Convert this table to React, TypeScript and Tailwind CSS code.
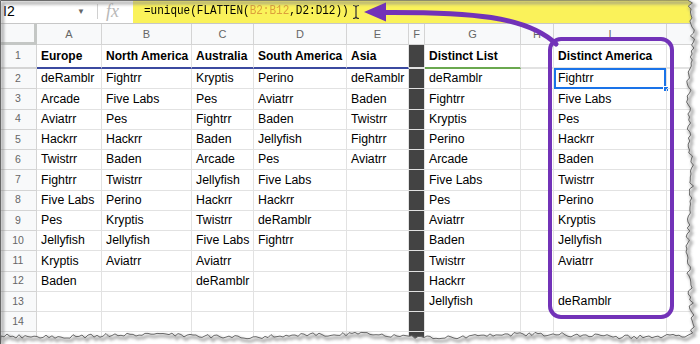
import React from "react";
import clsx from "clsx";

interface Col {
  letter: string;
  w: string;
}

const COLS: Col[] = [
  { letter: "A", w: "w-[65px]" },
  { letter: "B", w: "w-[90px]" },
  { letter: "C", w: "w-[62px]" },
  { letter: "D", w: "w-[93px]" },
  { letter: "E", w: "w-[62px]" },
  { letter: "F", w: "w-[16px]" },
  { letter: "G", w: "w-[96px]" },
  { letter: "H", w: "w-[33px]" },
  { letter: "I", w: "w-[113px]" },
  { letter: "J", w: "w-[100px]" },
];

// column contents, header first
const DATA: Record<string, string[]> = {
  A: ["Europe", "deRamblr", "Arcade", "Aviatrr", "Hackrr", "Twistrr", "Fightrr", "Five Labs", "Pes", "Jellyfish", "Kryptis", "Baden"],
  B: ["North America", "Fightrr", "Five Labs", "Pes", "Hackrr", "Baden", "Twistrr", "Perino", "Kryptis", "Jellyfish", "Aviatrr"],
  C: ["Australia", "Kryptis", "Pes", "Fightrr", "Baden", "Arcade", "Jellyfish", "Hackrr", "Twistrr", "Five Labs", "Aviatrr", "deRamblr"],
  D: ["South America", "Perino", "Aviatrr", "Baden", "Jellyfish", "Pes", "Five Labs", "Hackrr", "deRamblr", "Fightrr"],
  E: ["Asia", "deRamblr", "Baden", "Twistrr", "Fightrr", "Aviatrr"],
  G: ["Distinct List", "deRamblr", "Fightrr", "Kryptis", "Perino", "Arcade", "Five Labs", "Pes", "Aviatrr", "Baden", "Twistrr", "Hackrr", "Jellyfish"],
  I: ["Distinct America", "Fightrr", "Five Labs", "Pes", "Hackrr", "Baden", "Twistrr", "Perino", "Kryptis", "Jellyfish", "Aviatrr", "", "deRamblr"],
};

const ROWS = Array.from({ length: 15 }, (_, i) => i + 1);

function rand(i: number) {
  const x = Math.sin(i * 12.9898) * 43758.5453;
  return x - Math.floor(x);
}

// torn paper edge, right and bottom
function tornEdge() {
  const pts: string[] = ["0.5,344", "0.5,0.5"];
  let i = 0;
  for (let y = 0; y <= 334; y += 3) {
    const x = 690 + (rand(i++) - 0.5) * 5 + Math.sin(y / 23) * 2;
    pts.push(`${x.toFixed(1)},${y}`);
  }
  for (let x = 688; x >= 0; x -= 3) {
    const y = 335.5 + (rand(i++ + 400) - 0.5) * 4 + Math.sin(x / 31) * 1.5;
    pts.push(`${x},${y.toFixed(1)}`);
  }
  return pts;
}

const FormulaBar = () => (
  <div className="flex h-[24px] border-b border-[#c7c7c7]">
    <div className="flex w-[97px] items-center pl-[3px] text-[14px]">
      <span>I2</span>
      <span className="ml-auto mr-[12px] text-[8px] text-[#666]">▼</span>
    </div>
    <div className="my-[4px] w-px bg-[#d0d0d0]" />
    <div className="flex w-[35px] items-center pl-[8px] font-['Liberation_Serif',serif] text-[18px] italic text-[#b8b8b8]">
      fx
    </div>
    <div className="flex flex-1 items-center bg-[#faf25a] pl-[11px] font-['Liberation_Mono',monospace] text-[11px] leading-none">
      <span className="inline-block scale-y-[1.15]">=unique(FLATTEN(</span>
      <span className="inline-block scale-y-[1.15] text-[#dc9f3c]">B2:B12</span>
      <span className="inline-block scale-y-[1.15]">,D2:D12))</span>
      <svg width="8" height="16" viewBox="0 0 8 16" className="ml-[3px]">
        <path d="M1 1.5 Q4 1.5 4 3.5 Q4 1.5 7 1.5 M4 3.5 V12.5 M1 14.5 Q4 14.5 4 12.5 Q4 14.5 7 14.5" fill="none" stroke="#333" strokeWidth="1.2" />
      </svg>
    </div>
  </div>
);

const ColumnHeaders = () => (
  <div className="flex h-[21px]">
    <div className="w-[37px] shrink-0 border-r-[3px] border-b-[3px] border-[#c4c7c5] bg-[#f8f9fa]" />
    {COLS.map((c) => (
      <div
        key={c.letter}
        className={clsx(
          "flex shrink-0 items-center justify-center border-r border-b border-[#d4d4d4] bg-[#f8f9fa] text-[11px] text-[#666]",
          c.w
        )}
      >
        {c.letter === "J" ? "" : c.letter}
      </div>
    ))}
  </div>
);

const Cell = ({ col, row }: { col: Col; row: number }) => {
  const value = DATA[col.letter]?.[row - 1] ?? "";
  const head = row === 1;
  const dark = col.letter === "F";
  const blue = head && ["A", "B", "C", "D", "E"].includes(col.letter);
  const green = head && col.letter === "G";
  const selected = col.letter === "I" && row === 2;
  return (
    <div
      className={clsx(
        "relative flex shrink-0 items-center whitespace-nowrap border-r border-b border-[#e2e2e2] pl-[4px]",
        col.w,
        head ? "border-b-2 text-[12px] font-bold" : "text-[12.3px]",
        dark && "border-[#434343] bg-[#434343]",
        blue && "border-b-[#3b4aa0]",
        green && "border-b-[#6aa84f]"
      )}
    >
      {value}
      {selected && (
        <>
          <span className="absolute -top-px left-0 right-0 -bottom-px border-2 border-[#1a73e8]" />
          <span className="absolute -right-[3px] -bottom-[4px] h-[6px] w-[6px] border border-white bg-[#1a73e8]" />
        </>
      )}
    </div>
  );
};

const Row = ({ row }: { row: number }) => (
  <div className={clsx("flex", row === 1 ? "h-[24px]" : "h-[20.25px]")}>
    <div
      className={clsx(
        "flex w-[37px] shrink-0 items-center justify-center border-r border-b border-[#d4d4d4] bg-[#f8f9fa] text-[10.5px] text-[#666]",
        row === 1 && "border-b-2"
      )}
    >
      {row < 15 ? row : ""}
    </div>
    {COLS.map((c) => (
      <Cell key={c.letter} col={c} row={row} />
    ))}
  </div>
);

const Overlay = () => {
  const pts = tornEdge();
  const edge = "M" + pts.join(" L") + " Z";
  return (
    <svg className="pointer-events-none absolute inset-0" width="700" height="344">
      <defs>
        <filter id="blur" x="-5%" y="-5%" width="110%" height="110%">
          <feGaussianBlur stdDeviation="1.4" />
        </filter>
      </defs>
      <path d={"M0 0 H700 V344 H0 Z " + edge} fill="#fff" fillRule="evenodd" />
      <path d={edge} fill="none" stroke="#8a8a8a" strokeWidth="3" opacity="0.7" filter="url(#blur)" transform="translate(2 2.5)" />
      <path d={edge} fill="none" stroke="#5a5a5a" strokeWidth="0.9" />
      <path d="M383 12.5 C 470 12, 527 16, 556 44" fill="none" stroke="#7232b8" strokeWidth="5" strokeLinecap="round" />
      <polygon points="364,12 386,2.5 386,21.5" fill="#7232b8" />
    </svg>
  );
};

export default function App() {
  return (
    <div className="relative h-[344px] w-[700px] overflow-hidden bg-white font-['Liberation_Sans',Arial,sans-serif] text-black">
      <FormulaBar />
      <ColumnHeaders />
      {ROWS.map((r) => (
        <Row key={r} row={r} />
      ))}
      <div className="absolute left-[548px] top-[37px] h-[282px] w-[126px] rounded-[13px] border-[4.5px] border-[#7232b8]" />
      <Overlay />
    </div>
  );
}
